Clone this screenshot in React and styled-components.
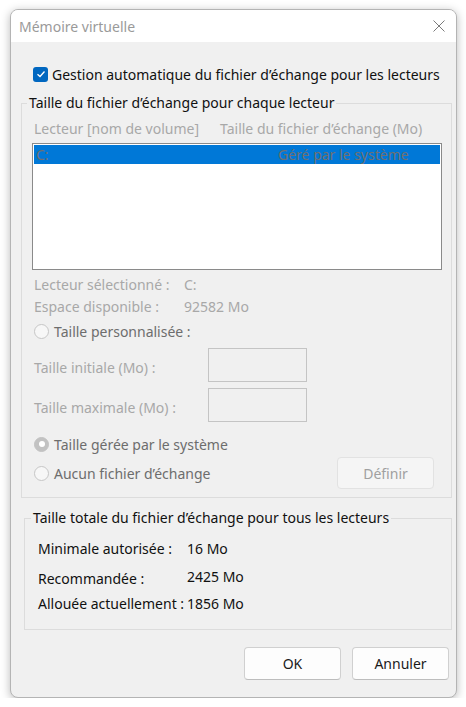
import React from 'react';
import styled, { createGlobalStyle } from 'styled-components';

const GlobalStyle = createGlobalStyle`
  html, body {
    margin: 0;
    background: #ffffff;
  }
  body {
    font-family: 'Segoe UI', 'Noto Sans', 'Liberation Sans', sans-serif;
    font-size: 14px;
    color: #111;
  }
`;

const Window = styled.div`
  margin: 9px 0 0 10px;
  width: 447px;
  height: 689px;
  box-sizing: border-box;
  background: #f0f0f0;
  border: 1px solid #b4b4b4;
  border-radius: 8px;
  box-shadow: 0 2px 10px rgba(0, 0, 0, 0.28);
  overflow: hidden;
  display: flex;
  flex-direction: column;
`;

const TitleBar = styled.div`
  height: 32px;
  flex: none;
  background: #fff;
  display: flex;
  align-items: center;
  padding-left: 8px;
  color: #9a9a9a;
  font-size: 14px;
`;

const CloseButton = styled.div`
  margin-left: auto;
  width: 34px;
  height: 32px;
  display: flex;
  align-items: center;
  justify-content: center;
  margin-right: 0;
`;

const CheckRow = styled.label`
  display: flex;
  align-items: center;
  gap: 4px;
  height: 20px;
  margin: 22px 0 0 22px;
`;

const CheckBox = styled.span`
  width: 15px;
  height: 15px;
  border-radius: 3px;
  background: #0067c0;
  display: flex;
  align-items: center;
  justify-content: center;
`;

const Group = styled.fieldset`
  margin: ${({ $top }) => $top}px 4px 0 ${({ $left }) => $left}px;
  padding: ${({ $pad }) => $pad};
  border: 1px solid #dcdcdc;
  min-width: 0;
`;

const Legend = styled.legend`
  padding: 0 2px;
  margin-left: ${({ $shift }) => $shift}px;
  line-height: 20px;
  color: #111;
`;

const HeaderRow = styled.div`
  display: flex;
  height: 20px;
  align-items: center;
  padding-left: 2px;
  margin-top: 5px;
  color: #a8a8a8;
`;

const HeaderCol = styled.span`
  width: ${({ $w }) => ($w ? `${$w}px` : 'auto')};
  flex: none;
  white-space: nowrap;
`;

const ListBox = styled.div`
  margin-top: 5px;
  height: 127px;
  box-sizing: border-box;
  border: 1px solid #8a8a8a;
  background: #fff;
  padding: 1px;
`;

const ListItem = styled.div`
  height: 19px;
  display: flex;
  align-items: center;
  background: #0078d7;
  color: #707070;
  padding-left: 2px;
`;

const ItemCol = styled.span`
  width: ${({ $w }) => ($w ? `${$w}px` : 'auto')};
  flex: none;
  white-space: nowrap;
`;

const InfoRow = styled.div`
  display: flex;
  align-items: center;
  height: 22px;
  padding-left: 2px;
  margin-top: ${({ $top }) => $top || 0}px;
  color: #a8a8a8;
`;

const InfoLabel = styled.span`
  width: ${({ $w }) => $w}px;
  flex: none;
  white-space: nowrap;
`;

const RadioRow = styled.div`
  display: flex;
  align-items: center;
  justify-content: space-between;
  height: ${({ $h }) => $h || 22}px;
  margin-top: ${({ $top }) => $top || 0}px;
  padding-left: 2px;
`;

const RadioLabel = styled.label`
  display: flex;
  align-items: center;
  gap: 5px;
  color: #6d6d6d;
`;

const Radio = styled.span`
  width: 15px;
  height: 15px;
  box-sizing: border-box;
  border-radius: 50%;
  flex: none;
  display: flex;
  align-items: center;
  justify-content: center;
  background: ${({ $checked }) => ($checked ? '#c2c2c2' : '#f7f7f7')};
  border: 1px solid ${({ $checked }) => ($checked ? '#c2c2c2' : '#c6c6c6')};

  &::after {
    content: '';
    display: ${({ $checked }) => ($checked ? 'block' : 'none')};
    width: 6px;
    height: 6px;
    border-radius: 50%;
    background: #fff;
  }
`;

const FieldRow = styled.div`
  display: flex;
  align-items: center;
  height: 34px;
  margin-top: ${({ $top }) => $top}px;
  padding-left: 2px;
  color: #a8a8a8;
`;

const FieldLabel = styled.span`
  width: 174px;
  flex: none;
  padding-top: 5px;
`;

const Input = styled.div`
  width: 99px;
  height: 34px;
  box-sizing: border-box;
  border: 1px solid #c4c4c4;
  background: #f0f0f0;
`;

const Button = styled.button`
  width: 97px;
  height: ${({ $h }) => $h}px;
  box-sizing: border-box;
  border-radius: 4px;
  font: inherit;
  background: ${({ disabled }) => (disabled ? '#f5f5f5' : '#fdfdfd')};
  color: ${({ disabled }) => (disabled ? '#a0a0a0' : '#1a1a1a')};
  border: 1px solid ${({ disabled }) => (disabled ? '#e2e2e2' : '#d0d0d0')};
  border-bottom-color: ${({ disabled }) => (disabled ? '#e2e2e2' : '#bdbdbd')};
  margin-right: ${({ $right }) => $right || 0}px;
  padding: 0;
`;

const TotalRow = styled.div`
  display: flex;
  align-items: center;
  height: 20px;
  margin-top: ${({ $top }) => $top}px;
  color: #111;
`;

const TotalValue = styled.span`
  position: relative;
  top: ${({ $raise }) => ($raise ? -2 : 0)}px;
`;

const Footer = styled.div`
  display: flex;
  justify-content: flex-end;
  gap: 11px;
  margin-top: 17px;
  padding-right: 7px;
`;

const totals = [
  { label: 'Minimale autorisée :', value: '16 Mo', top: 10 },
  { label: 'Recommandée :', value: '2425 Mo', top: 10, raise: true },
  { label: 'Allouée actuellement :', value: '1856 Mo', top: 5 },
];

export default function App() {
  return (
    <>
      <GlobalStyle />
      <Window>
        <TitleBar>
          Mémoire virtuelle
          <CloseButton>
            <svg width="12" height="12" viewBox="0 0 12 12">
              <path d="M0.5 0.5 L11.5 11.5 M11.5 0.5 L0.5 11.5" stroke="#7a7a7a" strokeWidth="1" />
            </svg>
          </CloseButton>
        </TitleBar>

        <CheckRow>
          <CheckBox>
            <svg width="10" height="10" viewBox="0 0 10 10">
              <path d="M1.5 5.2 L4 7.5 L8.5 2.5" fill="none" stroke="#fff" strokeWidth="1.3" />
            </svg>
          </CheckBox>
          Gestion automatique du fichier d’échange pour les lecteurs
        </CheckRow>

        <Group $top={9} $left={10} $pad="0 9px 8px 10px">
          <Legend $shift={-5}>Taille du fichier d’échange pour chaque lecteur</Legend>
          <HeaderRow>
            <HeaderCol $w={186}>Lecteur [nom de volume]</HeaderCol>
            <HeaderCol>Taille du fichier d’échange (Mo)</HeaderCol>
          </HeaderRow>
          <ListBox>
            <ListItem>
              <ItemCol $w={242}>C:</ItemCol>
              <ItemCol>Géré par le système</ItemCol>
            </ListItem>
          </ListBox>
          <InfoRow $top={3}>
            <InfoLabel $w={150}>Lecteur sélectionné :</InfoLabel>
            C:
          </InfoRow>
          <InfoRow>
            <InfoLabel $w={150}>Espace disponible :</InfoLabel>
            92582 Mo
          </InfoRow>
          <RadioRow $top={3}>
            <RadioLabel>
              <Radio />
              Taille personnalisée :
            </RadioLabel>
          </RadioRow>
          <FieldRow $top={6}>
            <FieldLabel>Taille initiale (Mo) :</FieldLabel>
            <Input />
          </FieldRow>
          <FieldRow $top={6}>
            <FieldLabel>Taille maximale (Mo) :</FieldLabel>
            <Input />
          </FieldRow>
          <RadioRow $top={11}>
            <RadioLabel>
              <Radio $checked />
              Taille gérée par le système
            </RadioLabel>
          </RadioRow>
          <RadioRow $top={2} $h={32}>
            <RadioLabel>
              <Radio />
              Aucun fichier d’échange
            </RadioLabel>
            <Button disabled $h={32} $right={8}>Définir</Button>
          </RadioRow>
        </Group>

        <Group $top={10} $left={13} $pad="0 9px 16px 13px">
          <Legend $shift={-7}>Taille totale du fichier d’échange pour tous les lecteurs</Legend>
          {totals.map((t) => (
            <TotalRow key={t.label} $top={t.top}>
              <InfoLabel $w={149}>{t.label}</InfoLabel>
              <TotalValue $raise={t.raise}>{t.value}</TotalValue>
            </TotalRow>
          ))}
        </Group>

        <Footer>
          <Button $h={33}>OK</Button>
          <Button $h={33}>Annuler</Button>
        </Footer>
      </Window>
    </>
  );
}
